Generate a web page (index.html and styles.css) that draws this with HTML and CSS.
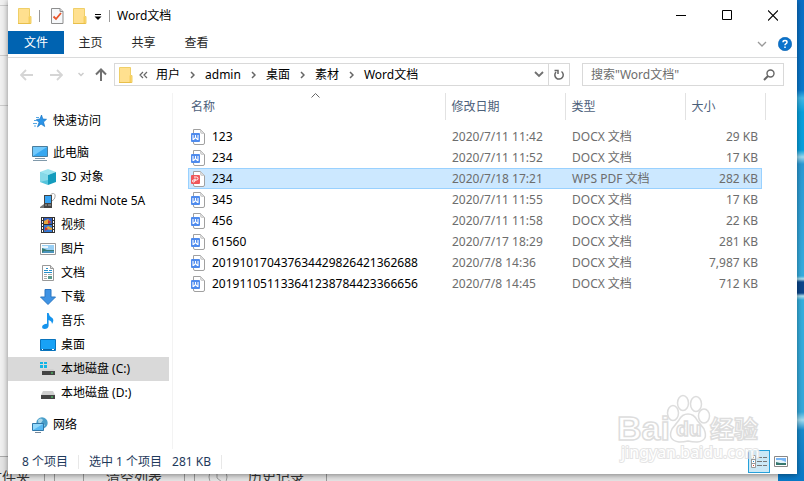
FILE: index.html
```html
<!DOCTYPE html>
<html lang="zh-CN">
  <head>
    <meta charset="utf-8">
    <title>Word文档</title>
    <link rel="stylesheet" href="styles.css">
  </head>
  <body>
    <!-- shared icons -->
    <svg class="sprite" aria-hidden="true">
      <symbol id="folder" viewBox="0 0 14 16">
        <path d="M.5.5h11v8h1.500v7H.5z" fill="#ffe08f" stroke="#efcf68"/>
        <path d="M10.500 8.500h2v7h-2z" fill="#f6cf5c"/>
        <path d="M0 15.500h12.500" stroke="#e8bf4a"/>
      </symbol>
      <symbol id="docx" viewBox="0 0 16 16">
        <path d="M2.500.500h7l4 4v9.500q0 1.500-1.500 1.500H4q-1.500 0-1.500-1.500z" fill="#fff" stroke="#a0a0a0"/>
        <path d="M9.500.500v2.500q0 1.500 1.500 1.500h2.500z" fill="#ddd" stroke="#bbb" stroke-width=".6"/>
        <rect x="0" y="4" width="9" height="9" rx="1" fill="#4f8bed"/>
        <path d="M2 6v4.500h.6l1.900-2 1.900 2h.6V6M4.500 6v2.500" fill="none" stroke="#fff" stroke-width="1.100"/>
      </symbol>
      <symbol id="pdf" viewBox="0 0 16 16">
        <path d="M2.500.500h7l4 4v9.500q0 1.500-1.500 1.500H4q-1.500 0-1.500-1.500z" fill="#fff" stroke="#a0a0a0"/>
        <path d="M9.500.500v2.500q0 1.500 1.500 1.500h2.500z" fill="#ddd" stroke="#bbb" stroke-width=".6"/>
        <rect x="0" y="4" width="9" height="9" rx="1" fill="#f0575a"/>
        <path d="M3 6h2.500q1.500 0 1.500 1.500T5.500 9H2.500q-1 0-1 1t1 1 1.500-1V7.500" fill="none" stroke="#fff" stroke-width="1"/>
      </symbol>
      <symbol id="chevron" viewBox="0 0 5 8">
        <path d="M1 1l3 3-3 3" fill="none" stroke="#666" stroke-width="1.500"/>
      </symbol>
    </svg>

    <div class="backdrop" aria-hidden="true">
      <div class="panel">
        <i class="line"></i><i class="line"></i><i class="line"></i>
        <div class="toolbar">
          <span class="tool folder-tool">文件夹</span>
          <span class="tool grip"></span>
          <span class="tool">清空列表</span>
          <span class="tool gap"></span>
          <span class="tool history">
            <svg width="20" height="20" viewBox="0 0 20 20" fill="none" stroke="#999"><circle cx="10" cy="10" r="9"/><path d="M9 4v7l5 4"/></svg>
            历史记录
          </span>
        </div>
      </div>
      <div class="desktop"></div>
    </div>

    <main class="window">
      <header class="titlebar">
        <svg width="14" height="16"><use href="#folder"/></svg>
        <i class="divider"></i>
        <button class="quick" aria-label="属性">
          <svg width="13" height="16" viewBox="0 0 13 16">
            <path d="M.5.500h8.500l3 3v12H.5z" fill="#f6f8fa" stroke="#8e8e8e"/>
            <path d="M9 .500v3h3" fill="#ddd" stroke="#8e8e8e"/>
            <path d="M2.500 8.500l2.500 2.500 5-6" fill="none" stroke="#e8552b" stroke-width="1.800"/>
          </svg>
        </button>
        <button class="quick" aria-label="新建文件夹"><svg width="14" height="16"><use href="#folder"/></svg></button>
        <button class="quick more" aria-label="自定义快速访问工具栏">
          <svg width="8" height="8" viewBox="0 0 8 8"><path d="M1 2.500h6" stroke="#000"/><path d="M.5 4.500h7L4 8z"/></svg>
        </button>
        <i class="divider"></i>
        <h1>Word文档</h1>
        <div class="controls">
          <button aria-label="最小化"><svg width="10" height="11" viewBox="0 0 10 11"><path d="M0 5.500h10" stroke="#000"/></svg></button>
          <button aria-label="最大化"><svg width="10" height="11" viewBox="0 0 10 11"><path d="M.5.500h9v9h-9z" fill="none" stroke="#000"/></svg></button>
          <button aria-label="关闭"><svg width="10" height="11" viewBox="0 0 10 11"><path d="M0 .500l10 10M10 .500l-10 10" stroke="#000" stroke-width="1.100"/></svg></button>
        </div>
      </header>

      <nav class="ribbon">
        <button class="tab file">文件</button>
        <button class="tab">主页</button>
        <button class="tab">共享</button>
        <button class="tab">查看</button>
        <div class="ribbon-end">
          <button aria-label="展开功能区"><svg width="10" height="6" viewBox="0 0 10 6"><path d="M1 1l4 4 4-4" fill="none" stroke="#999" stroke-width="1.300"/></svg></button>
          <button aria-label="帮助">
            <svg width="14" height="14" viewBox="0 0 14 14"><circle cx="7" cy="7" r="6.700" fill="#0a73cc" stroke="#075fae" stroke-width=".6"/><path d="M5 5.300Q5 3.600 7 3.600t2 1.600Q9 6.300 7.800 6.900 7 7.300 7 8.300M7 9.400v1.600" fill="none" stroke="#fff" stroke-width="1.500"/></svg>
          </button>
        </div>
      </nav>

      <div class="locationbar">
        <div class="history-buttons">
          <button aria-label="后退"><svg width="14" height="12" viewBox="0 0 14 12"><path d="M6 1L1 6l5 5M1 6h12" fill="none" stroke="#d5d5d5" stroke-width="1.800"/></svg></button>
          <button aria-label="前进"><svg width="14" height="12" viewBox="0 0 14 12"><path d="M8 1l5 5-5 5M13 6H1" fill="none" stroke="#d5d5d5" stroke-width="1.800"/></svg></button>
          <button class="recent" aria-label="最近的位置"><svg width="6" height="5" viewBox="0 0 6 5"><path d="M.5 1L3 3.500 5.500 1" fill="none" stroke="#ccc" stroke-width="1.500"/></svg></button>
          <button aria-label="上移"><svg width="12" height="14" viewBox="0 0 12 14"><path d="M1 6.500l5-5 5 5M6 2v11" fill="none" stroke="#707070" stroke-width="2"/></svg></button>
        </div>
        <div class="address">
          <svg width="14" height="16"><use href="#folder"/></svg>
          <svg class="overflow" width="9" height="8" viewBox="0 0 9 8"><path d="M4 1L1 4l3 3M8 1L5 4l3 3" fill="none" stroke="#666" stroke-width="1.200"/></svg>
          <a href="#">用户</a><svg width="5" height="8"><use href="#chevron"/></svg>
          <a href="#">admin</a><svg width="5" height="8"><use href="#chevron"/></svg>
          <a href="#">桌面</a><svg width="5" height="8"><use href="#chevron"/></svg>
          <a href="#">素材</a><svg width="5" height="8"><use href="#chevron"/></svg>
          <a href="#">Word文档</a>
          <button class="drop" aria-label="以前的位置"><svg width="10" height="7" viewBox="0 0 10 7"><path d="M1 1l4 4 4-4" fill="none" stroke="#707070" stroke-width="1.800"/></svg></button>
          <button class="refresh" aria-label="刷新"><svg width="12" height="12" viewBox="0 0 12 12"><path d="M8.500 2.500A4.200 4.200 0 1 1 3 3M1.500 1.500h3.500V5" fill="none" stroke="#666" stroke-width="1.500"/></svg></button>
        </div>
        <label class="search">
          <input type="text" aria-label="搜索" placeholder='搜索"Word文档"'>
          <svg width="12" height="12" viewBox="0 0 12 12" fill="none" stroke="#666"><circle cx="7.500" cy="4.500" r="3.500" stroke-width="1.400"/><path d="M5 7L1 11" stroke-width="2"/></svg>
        </label>
      </div>

      <div class="content">
        <nav class="tree">
          <a class="root" href="#">
            <svg width="16" height="16" viewBox="0 0 16 16"><path d="M9.500 2l1.300 4 3.700.300-3 2.700 1.200 4.500-3.700-2.500L5.500 14 7 9.500 4.500 6.500l3.500-.500z" fill="#2a94e8" stroke="#1674c4" stroke-width=".7"/><path d="M4 4.500h3M2 7.500h3M1 10.500h4M2 13h2" stroke="#58a8e4"/></svg>
            快速访问
          </a>
          <a class="root" href="#">
            <svg width="16" height="16" viewBox="0 0 16 16"><path d="M.5 1.500h15v10H.5z" fill="#37a8f0" stroke="#4b7d9c"/><path d="M1 2h14L1 11z" fill="#72c9fb"/><path d="M3 13.500h10M1 15.500h14" stroke="#8099aa"/></svg>
            此电脑
          </a>
          <a href="#">
            <svg width="16" height="16" viewBox="0 0 16 16"><path d="M0 3l8-3 8 3-8 3z" fill="#9ce5f0"/><path d="M0 3l8 3v10l-8-3z" fill="#55c4dc"/><path d="M16 3L8 6v10l8-3z" fill="#149cbd"/><path d="M0 3l8 3v5l-8 2z" fill="#86d9e8"/></svg>
            3D 对象
          </a>
          <a href="#">
            <svg width="16" height="16" viewBox="0 0 16 16"><path d="M10 3q1-3 3.500-2.500T15 4q0 2-3 4" fill="none" stroke="#aaa"/><path d="M4 2h8v13H4z" fill="#444"/><path d="M5 3h6v7H5z" fill="#37a4f3"/><path d="M5 12h2m1 0h3" stroke="#aaa"/><path d="M0 14l4-3v4H0z" fill="#777"/></svg>
            Redmi Note 5A
          </a>
          <a href="#">
            <svg width="16" height="16" viewBox="0 0 16 16"><path d="M1 0h14v16H1z" fill="#333"/><path d="M4 1h8v6H4z" fill="#315fc3"/><path d="M4 8h8v7H4z" fill="#337bd7"/><path d="M4 4l4-2 3 3-3 2H4zM5 12l3-3 4 2v2z" fill="#e9a63c"/><path d="M8 3l3 2-3 2zM5 10l3 2-3 2z" fill="#c33"/><path d="M2.500 1v14M13.500 1v14" stroke="#fff" stroke-dasharray="2 1"/></svg>
            视频
          </a>
          <a href="#">
            <svg width="16" height="16" viewBox="0 0 16 16"><path d="M.5 2.500h15v11H.5z" fill="#fff" stroke="#999"/><path d="M2 4h12v8H2z" fill="#98cff5"/><path d="M2 5h6v2H2z" fill="#e8f5fd"/><path d="M2 7l5 2 7 0v3H2z" fill="#3a7b71"/><path d="M4 10h10v2H2z" fill="#4b94bd"/></svg>
            图片
          </a>
          <a href="#">
            <svg width="16" height="16" viewBox="0 0 16 16"><path d="M2.500.500h8l3 3v12h-11z" fill="#fff" stroke="#999"/><path d="M10.500.500v3h3" fill="#ddd" stroke="#999"/><path d="M6 3.500h2M4 5.500h4M9 5.500h3M4 7.500h8" stroke="#258fca"/><path d="M4 9.500h3M8 9.500h4M4 11.500h3M4 13.500h3" stroke="#aaa"/><path d="M8 11h4v3H8z" fill="#5b9a8d"/></svg>
            文档
          </a>
          <a href="#">
            <svg width="16" height="16" viewBox="0 0 16 16"><path d="M5 .500h6V8h4.500L8 15.500.500 8H5z" fill="#3f93e4" stroke="#2b76c2"/></svg>
            下载
          </a>
          <a href="#">
            <svg width="16" height="16" viewBox="0 0 16 16"><path d="M7 0h1.600q.5 3 3 4.500T13 9l-1 2q0-3-3.400-4v6q-.5 3-4 3Q2 16 2 14t3-3l2-.2z" fill="#1694ed"/></svg>
            音乐
          </a>
          <a href="#">
            <svg width="16" height="16" viewBox="0 0 16 16"><path d="M.5 2.500h15v11H.5z" fill="#18a2f6" stroke="#0974bd"/><path d="M1 12.500h14" stroke="#0864a5"/><path d="M2 12.500h1m9 0h2" stroke="#fff"/></svg>
            桌面
          </a>
          <a class="current" href="#">
            <svg width="16" height="16" viewBox="0 0 16 16"><path d="M0 1h3v2H0zM4 1h3v2H4zM0 4h3v3H0zM4 4h3v3H4z" fill="#12b5e5"/><path d="M3 8h10l2 2H1z" fill="#d0d0d0"/><path d="M2 10h13v4H2z" fill="#444"/><path d="M11 12h2" stroke="#4fe36d"/></svg>
            本地磁盘 (C:)
          </a>
          <a href="#">
            <svg width="16" height="16" viewBox="0 0 16 16"><path d="M3 6h10l2 4H1z" fill="#d0d0d0"/><path d="M1 10h14v4H1z" fill="#444"/><path d="M11 12h2" stroke="#4fe36d"/></svg>
            本地磁盘 (D:)
          </a>
          <a class="root" href="#">
            <svg width="16" height="16" viewBox="0 0 16 16"><circle cx="10" cy="6" r="5.700" fill="#4a9fca"/><path d="M6 3q3-3 5 0l-2 3 4 2-2 3H7z" fill="#a9d7ea"/><path d="M.5 6.500h11v7H.5z" fill="#58b9f3" stroke="#3177a8"/><path d="M1 7h10L1 13z" fill="#91d8fb"/><path d="M3 15.500h6" stroke="#789"/></svg>
            网络
          </a>
        </nav>

        <section class="files">
          <table>
            <thead>
              <tr>
                <th class="name">名称
                  <svg class="sort" width="9" height="5" viewBox="0 0 9 5"><path d="M.5 4.500l4-4 4 4" fill="none" stroke="#666"/></svg>
                </th>
                <th class="date">修改日期</th>
                <th class="type">类型</th>
                <th class="size">大小</th>
              </tr>
            </thead>
            <tbody>
              <tr><td class="name"><svg width="16" height="16"><use href="#docx"/></svg>123</td><td>2020/7/11 11:42</td><td>DOCX 文档</td><td>29 KB</td></tr>
              <tr><td class="name"><svg width="16" height="16"><use href="#docx"/></svg>234</td><td>2020/7/11 11:52</td><td>DOCX 文档</td><td>17 KB</td></tr>
              <tr class="selected"><td class="name"><svg width="16" height="16"><use href="#pdf"/></svg>234</td><td>2020/7/18 17:21</td><td>WPS PDF 文档</td><td>282 KB</td></tr>
              <tr><td class="name"><svg width="16" height="16"><use href="#docx"/></svg>345</td><td>2020/7/11 11:55</td><td>DOCX 文档</td><td>17 KB</td></tr>
              <tr><td class="name"><svg width="16" height="16"><use href="#docx"/></svg>456</td><td>2020/7/11 11:58</td><td>DOCX 文档</td><td>22 KB</td></tr>
              <tr><td class="name"><svg width="16" height="16"><use href="#docx"/></svg>61560</td><td>2020/7/17 18:29</td><td>DOCX 文档</td><td>281 KB</td></tr>
              <tr><td class="name"><svg width="16" height="16"><use href="#docx"/></svg>201910170437634429826421362688</td><td>2020/7/8 14:36</td><td>DOCX 文档</td><td>7,987 KB</td></tr>
              <tr><td class="name"><svg width="16" height="16"><use href="#docx"/></svg>201911051133641238784423366656</td><td>2020/7/8 14:45</td><td>DOCX 文档</td><td>712 KB</td></tr>
            </tbody>
          </table>
        </section>
      </div>

      <footer class="statusbar">
        <span>8 个项目</span>
        <i class="divider"></i>
        <span>选中 1 个项目</span>
        <span class="total">281 KB</span>
        <i class="divider"></i>
        <div class="views">
          <button class="active" aria-label="详细信息">
            <svg width="17" height="15" viewBox="0 0 17 15"><path d="M.5 1.500h4v12h-4zM.5 5.500h4M.5 9.500h4" fill="#fff" stroke="#999"/><path d="M2 3.500h1" stroke="#444"/><path d="M2 7.500h1" stroke="#28c"/><path d="M2 11.500h1" stroke="#d43"/><path d="M6 3.500h5m1 0h4M6 7.500h5m1 0h4M6 11.500h5m1 0h4" stroke="#777"/></svg>
          </button>
          <button aria-label="大缩略图">
            <svg width="14" height="12" viewBox="0 0 14 12"><path d="M.5.500h13v10H.5z" fill="#fff" stroke="#888"/><path d="M2 2h10v7H2z" fill="#77b5f5"/><path d="M2 4h5l5 2v1H2z" fill="#e4f3fb"/><path d="M2 6l4 1h6v2H2z" fill="#36776e"/></svg>
          </button>
        </div>
      </footer>

      <svg class="watermark" width="150" height="72" viewBox="0 0 150 72" aria-hidden="true">
        <g fill="#fff" stroke="#dadada" stroke-width="1.500">
          <ellipse cx="56" cy="20" rx="5.500" ry="7.500"/>
          <ellipse cx="66" cy="10" rx="5.500" ry="7.500"/>
          <ellipse cx="79" cy="11" rx="5.500" ry="7.500"/>
          <ellipse cx="87" cy="23" rx="5.500" ry="7"/>
          <path d="M71 21q6 0 9 6l7 9q5 12-7 13-5 0-9-1-4 1-9 1-12-2-7-13l7-9q3-6 9-6z"/>
          <text class="logo" x="0" y="47">Bai</text>
          <text class="du" x="59" y="43">du</text>
          <text class="cn" x="93" y="45">经验</text>
        </g>
        <text class="url" x="4" y="65">jingyan.baidu.com</text>
      </svg>
    </main>
  </body>
</html>
```
FILE: styles.css
```css
* {
  box-sizing: border-box;
}

body {
  margin: 0;
  min-height: 100vh;
  padding: 0 7px 7px 8px;
  display: flex;
  position: relative;
  overflow: hidden;
  font-family: 'Noto Sans', 'Noto Sans CJK SC', sans-serif;
  font-size: 12px;
  line-height: 16px;
  color: #000;
}

button {
  display: flex;
  align-items: center;
  justify-content: center;
  padding: 0;
  border: none;
  background: none;
  font: inherit;
  color: inherit;
}

a {
  color: inherit;
  text-decoration: none;
}

svg {
  display: block;
  flex: none;
}

.sprite {
  position: absolute;
  width: 0;
  height: 0;
}

/* things behind the window */
.backdrop {
  position: absolute;
  inset: 0;
  display: flex;
}

.panel {
  flex: 1;
  display: flex;
  flex-direction: column;
  background: #f0f0f0;
  overflow: hidden;
}

.line {
  height: 50px;
  border-bottom: 1px solid #ccc;
}

.line:first-child {
  height: 6px;
}

.toolbar {
  display: flex;
  height: 25px;
  margin-top: auto;
  padding-top: 10px;
  border-top: 1px solid #aaa;
  background: #e4e4e4;
  font-size: 14px;
  line-height: 20px;
  color: #333;
  white-space: nowrap;
}

.tool {
  padding: 0 22px;
  border-right: 1px solid #999;
}

.folder-tool {
  margin-left: -12px;
  padding: 0 14px 0 0;
}

.grip {
  width: 30px;
  padding: 0;
  border-left: 1px solid #999;
  margin-left: 9px;
}

.gap {
  width: 10px;
  padding: 0;
}

.history {
  display: flex;
  gap: 20px;
  padding-left: 13px;
}

.desktop {
  width: 26px;
  background: linear-gradient(#0a6fc6 0, #087ace 90px, #42b9e8 98px, #08a2df 112px, #07a0de 150px, #9fdcf1 157px, #2b9bd6 164px, #36aee0 276px, #b0e2f0 279px, #0b468c 282px, #0b468c 293px, #b0e2f0 296px, #35b0df 300px, #35a9dc 412px, #a5dff2 420px, #188cce 430px, #0879c8 100%);
}

/* window */
.window {
  position: relative;
  flex: 1;
  min-width: 0;
  display: flex;
  flex-direction: column;
  background: #fff;
  box-shadow: 0 1px 6px rgba(0, 0, 0, 0.45);
}

.titlebar {
  display: flex;
  align-items: center;
  height: 31px;
  padding: 0 1px 0 10px;
}

.divider {
  width: 1px;
  height: 12px;
  background: #999;
}

.titlebar .divider {
  margin: 0 7px;
}

.quick {
  margin-left: 4px;
}

.quick + .quick {
  margin-left: 9px;
}

.quick.more {
  margin-left: 7px;
}

h1 {
  margin: 0;
  font-size: 12px;
  font-weight: normal;
}

.controls {
  display: flex;
  margin-left: auto;
}

.controls button {
  width: 46px;
  height: 31px;
}

.ribbon {
  display: flex;
  height: 27px;
  border-bottom: 1px solid #dadbdc;
}

.tab {
  width: 53px;
  height: 23px;
  padding-top: 1px;
  color: #262626;
}

.tab.file {
  width: 56px;
  background: #0063b1;
  color: #fff;
}

.ribbon-end {
  display: flex;
  align-items: center;
  gap: 11px;
  margin-left: auto;
  padding-right: 5px;
}

.locationbar {
  display: flex;
  gap: 12px;
  padding: 5px 13px 7px 12px;
}

.history-buttons {
  display: flex;
  align-items: center;
  gap: 15px;
}

.history-buttons .recent {
  margin-right: -4px;
}

.history-buttons + .address {
  margin-left: -5px;
}

.address {
  flex: 1;
  display: flex;
  align-items: center;
  gap: 10px;
  height: 23px;
  padding-left: 4px;
  border: 1px solid #d9d9d9;
  white-space: nowrap;
}

.overflow {
  margin: 0 -2px 0 -4px;
}

.drop {
  margin-left: auto;
}

.refresh {
  width: 21px;
  height: 21px;
  margin-left: -6px;
  border-left: 1px solid #d9d9d9;
}

.search {
  display: flex;
  align-items: center;
  width: 202px;
  padding: 0 8px;
  border: 1px solid #d9d9d9;
}

.search input {
  flex: 1;
  min-width: 0;
  padding: 0;
  border: none;
  outline: none;
  background: none;
  font: inherit;
}

.search input::placeholder {
  color: #6d6d6d;
}

.content {
  flex: 1;
  display: flex;
}

.tree {
  width: 165px;
  padding: 16px 3px 0 0;
  border-right: 1px solid #f3f3f3;
}

.tree a {
  display: flex;
  align-items: center;
  gap: 5px;
  height: 24px;
  padding-left: 32px;
}

.tree .root {
  padding-left: 24px;
}

.tree a + .root {
  margin-top: 8px;
}

.tree .current {
  background: #d9d9d9;
}

.files {
  flex: 1;
  padding-left: 15px;
}

table {
  width: 574px;
  table-layout: fixed;
  border-collapse: collapse;
}

thead::after {
  content: '';
  display: block;
  height: 6px;
}

th {
  position: relative;
  height: 27px;
  padding: 0 0 0 6px;
  border-left: 1px solid #e2e2e2;
  font-weight: normal;
  text-align: left;
  color: #4c607a;
}

th.name {
  padding-left: 3px;
  border-left: none;
}

th.date,
th.type {
  width: 120px;
}

th.size {
  width: 77px;
}

/* the last column's handle lies past the end of the rows */
th.size::after {
  content: '';
  position: absolute;
  top: 0;
  right: -4px;
  width: 1px;
  height: 27px;
  background: #e2e2e2;
}

.sort {
  position: absolute;
  top: 0;
  left: 48%;
}

td {
  height: 21px;
  padding: 0 0 0 7px;
  color: #6d6d6d;
  white-space: nowrap;
}

td.name {
  display: flex;
  align-items: center;
  gap: 5px;
  padding-left: 3px;
  color: #000;
}

td:last-child {
  padding: 0 4px 0 0;
  text-align: right;
}

.selected {
  background: #cce8ff;
  outline: 1px solid #99d1ff;
  outline-offset: -1px;
}

.statusbar {
  display: flex;
  align-items: center;
  gap: 10px;
  height: 25px;
  padding: 0 9px 0 14px;
  color: #1e395b;
}

.statusbar .divider {
  height: 14px;
  background: #e8e8e8;
}

.views {
  display: flex;
  gap: 4px;
  margin-left: auto;
}

.views .active {
  width: 22px;
  height: 23px;
  border: 1px solid #26a0da;
  background: #cbe8f6;
}

.watermark {
  position: absolute;
  right: 30px;
  bottom: 9px;
  opacity: 0.9;
  pointer-events: none;
  overflow: visible;
  font-family: 'Liberation Sans', 'Noto Sans CJK SC', sans-serif;
}

.logo {
  font-size: 34px;
  font-weight: bold;
}

.du {
  font-size: 21px;
  font-weight: bold;
}

.cn {
  font-size: 24px;
  font-weight: bold;
}

.url {
  font-family: 'Noto Sans', sans-serif;
  font-size: 16px;
  fill: #fff;
  stroke: #e2e2e2;
  stroke-width: 2px;
  paint-order: stroke;
}
```
